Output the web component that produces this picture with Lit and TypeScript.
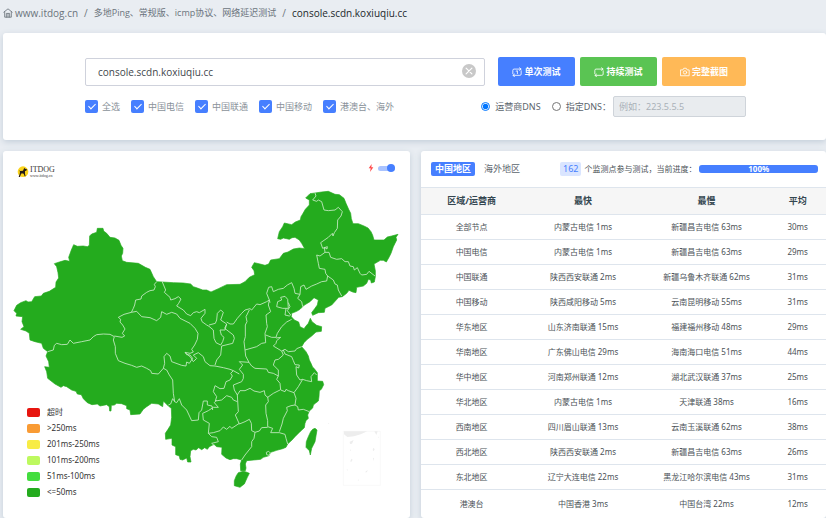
import { LitElement, html, css, svg } from "lit";
import { customElement, property } from "lit/decorators.js";

const LAND =
  "42,932 50,916 62,908 78,902 84,906 95,905 104,890 124,888 130,880 148,874 167,862 168,846 176,834 174,818 170,800 163,791 178,786 195,781 209,784 206,772 214,750 221,734 232,739 250,738 262,740 268,736 269,708 275,702 290,697 292,685 309,685 311,693 320,700 330,712 345,714 357,721 363,736 369,745 368,760 364,768 367,782 380,787 415,790 436,802 450,808 460,830 470,845 487,846 520,848 550,849 572,852 580,860 592,864 608,870 620,870 633,876 655,866 680,854 720,853 735,845 748,832 764,824 762,812 755,802 763,788 780,792 795,796 806,792 812,780 838,776 850,760 864,756 880,747 898,744 914,746 905,730 898,720 885,712 876,713 868,718 860,716 850,714 842,718 833,716 838,695 848,680 853,669 875,674 886,666 901,660 903,650 908,642 916,628 928,615 928,600 917,594 930,581 945,579 965,576 985,574 1005,583 1018,584 1032,595 1038,610 1046,628 1052,640 1054,656 1059,671 1075,671 1092,678 1104,684 1113,695 1118,706 1122,720 1152,720 1162,711 1175,708 1194,703 1188,712 1190,720 1180,740 1173,760 1168,770 1159,786 1150,781 1141,781 1122,792 1126,812 1126,830 1123,846 1114,849 1112,840 1105,838 1100,850 1090,858 1070,862 1068,878 1058,876 1047,871 1040,880 1027,890 1016,892 995,915 975,925 973,937 955,938 938,946 935,938 944,926 952,915 955,900 942,893 930,905 912,916 900,928 890,934 875,940 874,950 883,960 896,966 900,980 912,986 918,978 925,970 931,955 936,965 950,976 965,980 964,994 948,996 935,1008 922,1018 912,1028 905,1040 918,1055 925,1068 928,1080 933,1090 938,1102 942,1105 952,1118 952,1143 968,1144 971,1154 964,1168 958,1172 957,1190 955,1203 946,1210 940,1215 938,1224 928,1233 923,1245 925,1255 918,1262 915,1270 913,1283 900,1295 885,1310 876,1320 863,1332 858,1342 848,1346 830,1351 812,1357 807,1367 790,1372 782,1378 772,1379 740,1382 736,1392 738,1404 736,1412 722,1412 721,1392 725,1380 710,1376 700,1376 690,1379 678,1374 665,1363 666,1342 650,1340 642,1333 628,1340 622,1348 614,1343 605,1349 596,1343 588,1350 580,1348 572,1352 570,1370 573,1386 563,1386 560,1374 548,1380 540,1378 538,1368 527,1364 527,1340 516,1335 516,1315 497,1318 496,1300 504,1288 512,1275 515,1252 514,1225 505,1218 490,1203 488,1220 475,1212 455,1210 440,1220 430,1228 420,1242 392,1244 390,1230 380,1226 380,1217 365,1211 350,1210 343,1215 334,1216 333,1233 329,1233 328,1220 320,1214 300,1218 292,1212 276,1214 262,1208 250,1196 244,1184 232,1182 228,1174 215,1170 200,1160 190,1157 183,1162 165,1152 143,1135 140,1115 134,1100 148,1102 146,1085 138,1068 143,1055 130,1045 125,1030 105,1025 90,1020 88,1000 78,993 62,988 72,980 66,965 68,950 48,948 50,940";
const HAINAN = "703,1442 709,1427 715,1418 730,1414 738,1416 748,1420 742,1432 733,1452 726,1457 720,1462 703,1457";
const TAIWAN = "945,1285 951,1290 945,1325 935,1345 931,1365 928,1352 918,1342 919,1325 925,1310 932,1295 938,1288";

const BORDERS = [
  "470,845 463,853 466,860 462,870 450,872 440,877 425,888 423,897 407,900 404,915 400,925 394,937 372,943 355,952 362,958 360,966 368,975 375,987 367,1000 374,1008 366,1012 343,1008",
  "143,1055 160,1050 163,1036 170,1030 185,1034 202,1033 210,1020 220,1030 245,1025 270,1020 280,1010 290,1004 310,1002 330,1003 343,1010 340,1020 346,1040 346,1060 355,1082 375,1090 395,1096 410,1102 425,1098 440,1105 452,1112 455,1120 475,1122 490,1105 500,1110 508,1125 518,1140 520,1180 524,1205 518,1196 512,1212 505,1215",
  "394,937 410,934 425,950 450,953 470,962 482,952 485,935 500,943 515,937 530,942 540,955 570,970 585,985 594,1000 592,1018 584,1035 575,1048 580,1056 570,1060 555,1057 560,1064 570,1065 578,1075 568,1090 560,1086 558,1098 545,1096 515,1085 510,1068 500,1060 492,1070 494,1090 490,1105",
  "555,1057 572,1072 580,1085 590,1075 580,1065 595,1058 610,1070 615,1085 630,1097 645,1098 670,1103 690,1108 700,1112",
  "487,846 497,870 493,877 510,892 512,900 525,896 535,890 543,897 536,910 530,918 550,930 560,942 572,947 580,938 590,935 598,938 615,928 615,940 603,955 606,965 620,975 627,979 640,990 642,1015 648,1028 662,1035 668,1025 672,1012 664,1005 660,990 675,990 680,972 662,960 670,937 662,930 652,940 650,960 646,970 627,975",
  "680,972 674,985 700,1005 703,1015 698,1030 665,1038 662,1065 650,1080 645,1095",
  "680,966 690,972 700,972 712,955 725,940 735,930 750,926 755,930 770,912 780,914 800,905 808,900 810,908",
  "748,930 738,950 741,965 736,975 736,1010 732,1025 735,1050 737,1068 747,1087 718,1085 728,1095 718,1108 730,1123 730,1135 725,1145 700,1155 703,1170 712,1185",
  "808,900 805,915 812,935 798,945 800,970 802,980 795,1000 797,1028 785,1030 770,1040 735,1050",
  "797,1005 815,1012 828,1012 832,1000 845,980 860,966 875,958",
  "808,900 800,880 806,862 815,860 820,875 835,868 850,865 862,855 875,848 882,865 885,880 900,883 902,860 912,855 918,868 935,858 950,852 965,845 980,843 983,828",
  "900,883 893,895 905,905 908,920",
  "830,920 833,905 845,900 842,892 855,889 863,898 865,925 848,925 830,920",
  "865,908 870,920 862,932 872,945 868,948 855,945 858,925",
  "945,579 948,588 938,600 950,604 955,600 965,605 972,630 985,632 1005,630 1015,622 1027,635 1023,648 1013,660 1012,685 1003,698 999,708 997,700 985,712 962,728 968,745 982,740 981,747 973,742 975,757",
  "975,757 960,768 950,765 955,790 958,805 975,808 977,820 983,828",
  "975,757 987,757 992,772 1010,778 1025,776 1035,785 1045,785 1050,798 1060,800 1063,810 1072,803 1080,820 1085,825 1100,823 1107,814 1125,828",
  "983,828 1000,840 1005,852 1012,855 1015,870 1025,888",
  "700,1112 692,1120 697,1128 690,1140 678,1145 672,1165 660,1166 645,1157 640,1175 650,1190 646,1203 665,1200 680,1187 695,1192 700,1200 712,1205",
  "700,1112 718,1122",
  "747,1087 755,1098 765,1105 800,1107 805,1117 820,1120 835,1128 835,1110 820,1095 825,1080 835,1078 850,1065 845,1053 820,1038 828,1030 830,1022 842,1012 828,1014",
  "845,1053 855,1048 865,1055 885,1053 890,1046 905,1040",
  "850,1050 855,1062 875,1070 880,1082 885,1094 898,1095 896,1104 888,1100 890,1125 900,1140 908,1138",
  "835,1128 830,1138 840,1150 842,1170 855,1175 858,1168 865,1172 882,1178 895,1160 908,1138 920,1142 935,1145 933,1130 943,1118 950,1125",
  "712,1185 720,1172 735,1172 750,1165 762,1173 780,1177 793,1172 795,1185 803,1192 820,1180 840,1170",
  "803,1190 805,1205 797,1215 798,1240 803,1262 803,1280 818,1285 812,1298 838,1298 855,1303 858,1315 863,1332",
  "882,1178 888,1195 885,1215 893,1220 895,1230 910,1228 928,1235",
  "885,1215 873,1217 860,1222 862,1232 850,1255 846,1272 838,1295",
  "803,1282 785,1283 778,1293 765,1297 755,1292 754,1270 748,1258 735,1265 718,1272 706,1245 715,1235 712,1185",
  "718,1270 695,1285 690,1279 680,1288 670,1281 660,1292 640,1298 625,1300 628,1270 610,1260 608,1240 625,1232 640,1222 655,1222 643,1208 650,1200",
  "524,1205 530,1208 538,1196 545,1215 560,1230 575,1262 595,1260 597,1238 605,1230 610,1203 622,1203 622,1215 636,1218 638,1230",
  "625,1300 635,1310 650,1312 655,1325 635,1330 642,1336",
  "765,1297 762,1315 755,1325 755,1340 735,1365 725,1380",
  "799,1357 806,1354 811,1359 807,1366 800,1364 799,1357",
];

@customElement("china-map")
class ChinaMap extends LitElement {
  static styles = css`
    :host { display: block; }
    .map { display: block; width: 100%; height: auto; }
    .land { fill: #24ab1e; stroke: #24ab1e; stroke-width: 2; stroke-linejoin: round; }
    .border { fill: none; stroke: #c4eac1; stroke-width: 2.6; stroke-linejoin: round; }
    .frame { fill: none; stroke: #f9f9f9; stroke-width: 3; }
    .sea { fill: #ededed; }
  `;
  render() {
    return html`<svg class="map" viewBox="9 453 1221 1101" role="img" aria-label="中国地图">
      <polygon class="land" points=${LAND}></polygon>
      <polygon class="land" points=${HAINAN}></polygon>
      <polygon class="land" points=${TAIWAN}></polygon>
      ${BORDERS.map((b) => svg`<polyline class="border" points=${b}></polyline>`)}
      <rect class="frame" x="1030" y="1294" width="111" height="162"></rect>
      <path class="sea" d="M1032 1294H1102L1082 1303L1062 1309L1042 1311L1032 1303ZM1123 1294H1133L1129 1305ZM1049 1325L1061 1320L1056 1331L1050 1332ZM1120 1343L1124 1348L1121 1354L1118 1350ZM1054 1376L1058 1379L1053 1387L1051 1384ZM1119 1373L1122 1375L1119 1384ZM1040 1409L1043 1407L1042 1413ZM1095 1417L1103 1409L1101 1417ZM1073 1440L1076 1438L1075 1444ZM1050 1348L1053 1351L1050 1353ZM984 1270L988 1269L986 1273ZM1134 1310L1137 1311L1136 1314Z"></path>
    </svg>`;
  }
}

@customElement("line-icon")
class LineIcon extends LitElement {
  @property() name = "";
  static styles = css`
    :host { display: inline-flex; width: 10px; height: 10px; flex: none; }
    .icon { width: 100%; height: 100%; fill: none; stroke: currentColor; stroke-width: 2; stroke-linecap: round; stroke-linejoin: round; }
    .solid { fill: currentColor; stroke: none; }
  `;
  render() {
    const loop = svg`<path d="M2 16V8a3 3 0 0 1 3-3h16M18 2l4 3-4 3M22 9v8a3 3 0 0 1-3 3H3M6 17l-4 3 4 3"></path>`;
    const shapes: Record<string, unknown> = {
      home: svg`<path d="M2 10 12 2l10 8M4 9v13h16V9M8 22v-9h8v9M12 14v8"></path>`,
      once: svg`${loop}<path d="M10 10l3-1v7"></path>`,
      loop,
      camera: svg`<path d="M2 7h5l2-4h6l2 4h5v14H2Z"></path><circle cx="12" cy="13" r="4"></circle>`,
      bolt: svg`<path class="solid" d="M14 0 5 13h6L9 24 19 10h-6Z"></path>`,
      close: svg`<circle class="solid" cx="12" cy="12" r="12"></circle><path stroke="#fff" d="M7 7l10 10M17 7 7 17"></path>`,
    };
    return html`<svg class="icon" viewBox="0 0 24 24" aria-hidden="true">${shapes[this.name]}</svg>`;
  }
}

@customElement("app-root")
class AppRoot extends LitElement {
  static styles = css`
    :host {
      display: flex; flex-direction: column; box-sizing: border-box; min-height: 100vh; overflow: hidden;
      padding-left: 3px; background: #e9edf2; color: #4b5257;
      font: 9px/12px "Noto Sans", "Noto Sans CJK SC", sans-serif;
    }
    * { box-sizing: border-box; }
    button, input { font: inherit; margin: 0; }
    .crumbs { display: flex; align-items: center; gap: 6px; height: 33px; padding: 0 0 7px; color: #6b747c; font: 10px/12px "Open Sans", "Noto Sans CJK SC", sans-serif; }
    .crumbs a { display: flex; align-items: center; gap: 2px; color: inherit; text-decoration: none; }
    .crumbs .zh { font-size: 9px; }
    .crumbs .here { color: #22272b; }
    .card { background: #fff; border-radius: 3px; box-shadow: 0 2px 6px #c3ced9; }
    .form { display: flex; flex-direction: column; gap: 10px; padding: 24px 80px 23px 82px; }
    .row { display: flex; align-items: center; justify-content: space-between; }
    .search { position: relative; display: flex; flex: 1; margin-right: 13px; }
    .host { width: 100%; height: 28px; padding: 0 32px 0 12px; border: 1px solid #cfd2dc; border-radius: 2px; color: #3f464c; font: 10px/12px "Open Sans", sans-serif; outline: none; }
    .clear { position: absolute; right: 9px; top: 6px; display: flex; padding: 0; border: 0; background: none; color: #c8c8c8; }
    .clear line-icon { width: 14px; height: 14px; }
    .actions { display: flex; gap: 5px; }
    .btn { display: flex; align-items: center; justify-content: center; gap: 2px; width: 77px; height: 29px; padding: 0; border: 0; border-radius: 2px; color: #fff; font-weight: 700; background: #467fff; }
    .green { background: #5ac453; }
    .orange { width: 84px; background: #ffb957; }
    .group { display: flex; align-items: center; gap: 11px; }
    .check { display: flex; align-items: center; gap: 4px; color: #8a929a; white-space: nowrap; }
    .tick { appearance: none; display: grid; place-items: center; width: 13px; height: 13px; border-radius: 2px; background: #467fff; }
    .tick::after { content: ""; width: 3px; height: 6px; margin-bottom: 2px; border: solid #fff; border-width: 0 1px 1px 0; transform: rotate(45deg); }
    .dns { color: #5b646c; gap: 5px; }
    .radio { width: 9px; height: 9px; accent-color: #0075ff; }
    .custom { display: flex; align-items: center; gap: 2px; }
    .server { width: 133px; height: 21px; padding: 0 5px; border: 1px solid #cfd4da; border-radius: 2px; background: #e9ecef; }
    .server::placeholder { color: #aab1b8; opacity: 1; }
    .columns { display: grid; grid-template-columns: 407fr 405fr; gap: 11px; flex: 1; margin-top: 11px; }
    .mapcard { position: relative; }
    .brand { position: absolute; left: 14px; top: 14px; display: flex; align-items: center; gap: 1px; color: #3c3838; }
    .dog { width: 12px; height: 12px; }
    .name { display: flex; flex-direction: column; font: 8px/9px "Liberation Serif", serif; }
    .site { font-size: 4px; line-height: 4px; }
    .live { position: absolute; right: 15px; top: 13px; display: flex; align-items: center; gap: 3px; color: #ff4a4a; }
    .live line-icon { width: 8px; height: 8px; }
    .switch { appearance: none; display: flex; justify-content: flex-end; align-items: center; width: 17px; height: 5px; border-radius: 3px; background: #a9c3ff; }
    .switch::after { content: ""; width: 8px; height: 8px; border-radius: 50%; background: #467fff; }
    .legend { position: absolute; left: 24px; bottom: 20px; display: grid; gap: 4px; margin: 0; padding: 0; list-style: none; color: #333; font-size: 8px; }
    .legend li { display: flex; align-items: center; gap: 7px; }
    .swatch { width: 13px; height: 9px; border-radius: 2px; }
    .bar { display: flex; align-items: center; gap: 5px; height: 36px; padding: 0 8px 0 10px; }
    .tab { height: 14px; padding: 0 4px; border: 0; border-radius: 2px; background: none; color: #5b646c; line-height: 14px; white-space: nowrap; }
    .on { background: #467fff; color: #fff; font-weight: 700; }
    .status { display: flex; align-items: center; flex: 1; gap: 3px; margin-left: 31px; font-size: 8px; white-space: nowrap; }
    .count { padding: 1px 3px; border-radius: 2px; background: #dae5ff; color: #467fff; font-size: 9px; }
    .progress { flex: 1; border-radius: 3px; background: #e9ecef; }
    .fill { height: 8px; border-radius: 3px; background: #467fff; color: #fff; font-weight: 700; line-height: 8px; text-align: center; }
    .data { width: 100%; table-layout: fixed; border-collapse: collapse; text-align: center; font-size: 8px; }
    .data th { height: 27px; padding: 0; border: solid #dee5ed; border-width: 1px 0; background: #f6f6f6; color: #344650; font-size: 9px; font-weight: 700; }
    .data td { height: 25px; padding: 0; border-bottom: 1px solid #dee5ed; white-space: nowrap; }
    .data tr:last-child td { height: 28px; border: 0; }
    .c1 { width: 25%; } .c2 { width: 30%; } .c3 { width: 31%; } .c4 { width: 14%; }
  `;

  private carriers = ["全选", "中国电信", "中国联通", "中国移动", "港澳台、海外"];
  private levels = [
    ["#e7150f", "超时"], ["#f99b34", ">250ms"], ["#f8ec45", "201ms-250ms"],
    ["#bdf95f", "101ms-200ms"], ["#43dd3f", "51ms-100ms"], ["#24ab1e", "<=50ms"],
  ];
  private rows = [
    ["全部节点", "内蒙古电信 1ms", "新疆昌吉电信 63ms", "30ms"],
    ["中国电信", "内蒙古电信 1ms", "新疆昌吉电信 63ms", "29ms"],
    ["中国联通", "陕西西安联通 2ms", "新疆乌鲁木齐联通 62ms", "31ms"],
    ["中国移动", "陕西咸阳移动 5ms", "云南昆明移动 55ms", "31ms"],
    ["华东地区", "山东济南联通 15ms", "福建福州移动 48ms", "29ms"],
    ["华南地区", "广东佛山电信 29ms", "海南海口电信 51ms", "44ms"],
    ["华中地区", "河南郑州联通 12ms", "湖北武汉联通 37ms", "25ms"],
    ["华北地区", "内蒙古电信 1ms", "天津联通 38ms", "16ms"],
    ["西南地区", "四川眉山联通 13ms", "云南玉溪联通 62ms", "38ms"],
    ["西北地区", "陕西西安联通 2ms", "新疆昌吉电信 63ms", "26ms"],
    ["东北地区", "辽宁大连电信 22ms", "黑龙江哈尔滨电信 43ms", "31ms"],
    ["港澳台", "中国香港 3ms", "中国台湾 22ms", "12ms"],
  ];

  render() {
    return html`
      <nav class="crumbs">
        <a href="#"><line-icon name="home"></line-icon>www.itdog.cn</a><span>/</span>
        <a class="zh" href="#">多地Ping、常规版、icmp协议、网络延迟测试</a><span>/</span>
        <span class="here">console.scdn.koxiuqiu.cc</span>
      </nav>
      <form class="card form">
        <div class="row">
          <div class="search">
            <input class="host" aria-label="域名" .value=${"console.scdn.koxiuqiu.cc"} />
            <button class="clear" type="button" aria-label="清除"><line-icon name="close"></line-icon></button>
          </div>
          <div class="actions">
            <button class="btn" type="button"><line-icon name="once"></line-icon>单次测试</button>
            <button class="btn green" type="button"><line-icon name="loop"></line-icon>持续测试</button>
            <button class="btn orange" type="button"><line-icon name="camera"></line-icon>完整截图</button>
          </div>
        </div>
        <div class="row">
          <div class="group">
            ${this.carriers.map((c) => html`<label class="check"><input class="tick" type="checkbox" checked />${c}</label>`)}
          </div>
          <div class="group">
            <label class="check dns"><input class="radio" type="radio" name="dns" checked />运营商DNS</label>
            <div class="custom">
              <label class="check dns"><input class="radio" type="radio" name="dns" />指定DNS：</label>
              <input class="server" aria-label="指定DNS" placeholder="例如：223.5.5.5" disabled />
            </div>
          </div>
        </div>
      </form>
      <main class="columns">
        <section class="card mapcard">
          <china-map></china-map>
          <div class="brand">
            <svg class="dog" viewBox="0 0 36 36" aria-hidden="true">
              <circle cx="18" cy="17" r="16" fill="#fbd41c"></circle>
              <path fill="#251d18" d="M22 5l2 3 6 2-2 4-4 1v9l2 7h-3l-3-8-6-1-3 4-2 7H5l3-9 1-7-3-4 4 2 8-1Z"></path>
            </svg>
            <span class="name">ITDOG<span class="site">www.itdog.cn</span></span>
          </div>
          <label class="live"><line-icon name="bolt"></line-icon><input class="switch" type="checkbox" aria-label="快速模式" checked /></label>
          <ul class="legend">
            ${this.levels.map(([color, text]) => html`<li><span class="swatch" style="background:${color}"></span>${text}</li>`)}
          </ul>
        </section>
        <section class="card">
          <header class="bar">
            <button class="tab on" type="button">中国地区</button>
            <button class="tab" type="button">海外地区</button>
            <div class="status">
              <span class="count">162</span><span>个监测点参与测试，当前进度：</span>
              <div class="progress" role="progressbar" aria-label="当前进度" aria-valuenow="100"><div class="fill" style="width:100%">100%</div></div>
            </div>
          </header>
          <table class="data">
            <thead><tr><th class="c1">区域/运营商</th><th class="c2">最快</th><th class="c3">最慢</th><th class="c4">平均</th></tr></thead>
            <tbody>${this.rows.map((r) => html`<tr>${r.map((c) => html`<td>${c}</td>`)}</tr>`)}</tbody>
          </table>
        </section>
      </main>`;
  }
}
